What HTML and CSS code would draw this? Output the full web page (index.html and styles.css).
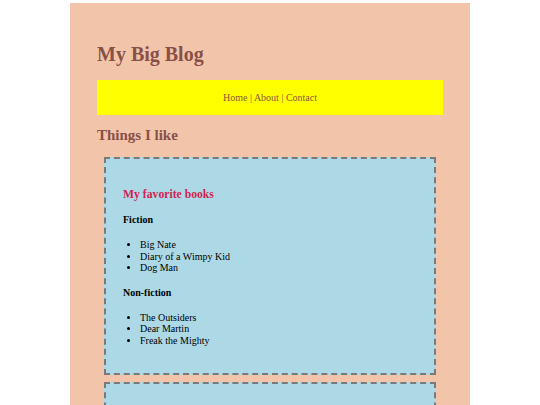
FILE: index.html
```html
<!DOCTYPE html>
<html lang="en">
<head>
<meta charset="utf-8">
<title>My Big Blog</title>
<link rel="stylesheet" href="styles.css">
</head>
<body>
<div class="page">
  <h1 class="site-title">My Big Blog</h1>
  <nav class="nav">Home | About | Contact</nav>
  <h2 class="section-title">Things I like</h2>
  <section class="card">
    <h3 class="card-title">My favorite books</h3>
    <h4 class="group-title">Fiction</h4>
    <ul class="list">
      <li>Big Nate</li>
      <li>Diary of a Wimpy Kid</li>
      <li>Dog Man</li>
    </ul>
    <h4 class="group-title">Non-fiction</h4>
    <ul class="list">
      <li>The Outsiders</li>
      <li>Dear Martin</li>
      <li>Freak the Mighty</li>
    </ul>
  </section>
  <section class="card">
    <h3 class="card-title">My favorite movies</h3>
    <ul class="list">
      <li>Coco</li>
      <li>Inside Out</li>
    </ul>
  </section>
</div>
</body>
</html>
```

FILE: styles.css
```css
html, body {
  margin: 0;
  padding: 0;
  background: #ffffff;
}

body {
  font-family: "Liberation Serif", "Times New Roman", serif;
  font-size: 10px;
  line-height: 1.15;
}

.page {
  width: 346px;
  margin: 3px auto 0;
  padding: 27px 27px 27px;
  background: #f2c5ab;
}

.site-title {
  font-size: 20px;
  font-weight: bold;
  color: #8a5048;
  margin: 13.4px 0 13.4px;
}

.nav {
  background: #ffff00;
  color: #8a5a3c;
  text-align: center;
  padding: 11.75px 0;
  font-size: 10px;
}

.section-title {
  font-size: 15px;
  font-weight: bold;
  color: #8a5048;
  margin: 12.45px 0 12.45px;
}

.card {
  margin: 7px;
  padding: 17px;
  background: #add8e6;
  border: 2px dashed #7a7a7a;
}

.card-title {
  font-size: 11.7px;
  font-weight: bold;
  color: #d21f50;
  margin: 11.7px 0;
}

.group-title {
  font-size: 10px;
  font-weight: bold;
  color: #000;
  margin: 13.3px 0;
}

.list {
  margin: 10px 0;
  padding-left: 17px;
  color: #000;
}
```
